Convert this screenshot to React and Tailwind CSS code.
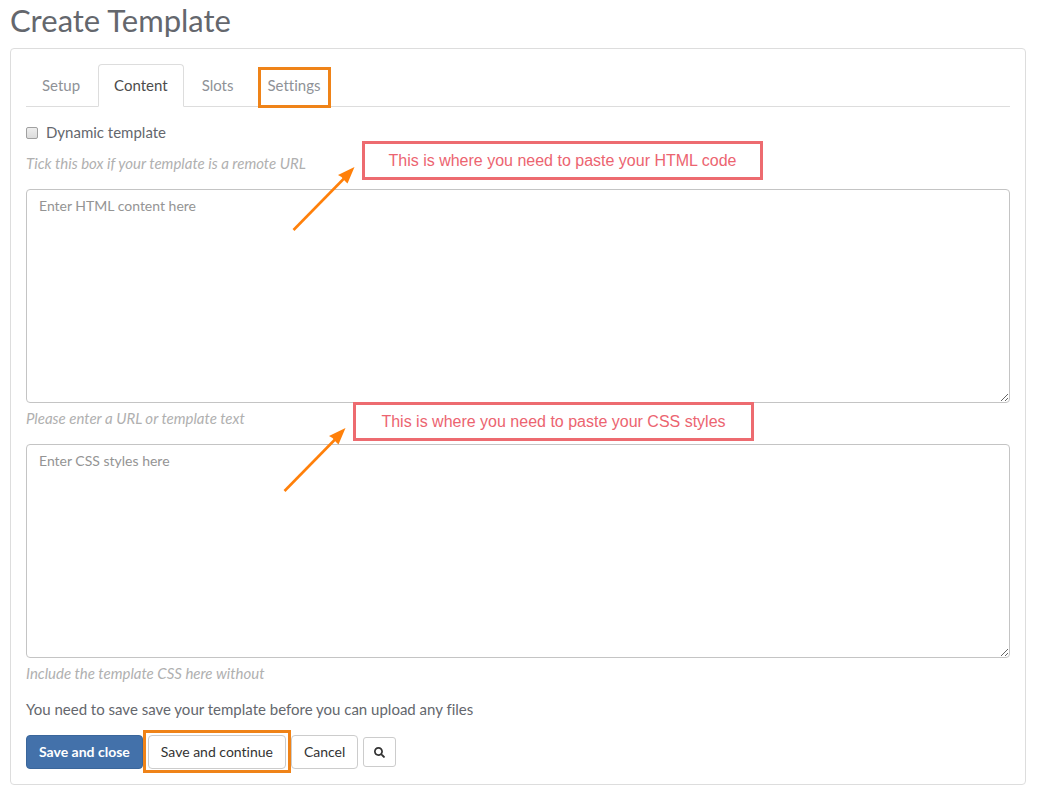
import React from 'react';
import { FaSearch } from 'react-icons/fa';

const tabs = [
  { id: "setup", label: "Setup" },
  { id: "content", label: "Content", active: true },
  { id: "slots", label: "Slots" },
  { id: "settings", label: "Settings", highlight: true }
];

export default function App() {
  return (
    <main className="pl-[10px] pr-[15px] pb-5 bg-white font-['Lato',sans-serif] text-[15px] leading-[21px] text-[#64676d] [font-variant-ligatures:none]">
      <h1 className="pt-[3px] mb-[11px] text-[31px] leading-[34px]">Create Template</h1>

      <form className="p-[15px] border border-[#dddddd] rounded-[4px]">
        <nav className="flex gap-[2px] mb-[15px] border-b border-[#dddddd]">
          {tabs.map(tab => <Tab key={tab.id} tab={tab} />)}
        </nav>

        <label className="flex items-center gap-2 mb-[10px]">
          <input type="checkbox" className="appearance-none w-3 h-3 rounded-[2px] border border-[#a0a0a0] bg-linear-to-b from-[#eeeeee] to-[#dcdcdc] checked:bg-[#428bca]" />
          Dynamic template
        </label>
        <Help>Tick this box if your template is a remote URL</Help>

        <Field id="html" placeholder="Enter HTML content here" help="Please enter a URL or template text">
          <Callout className="left-[336px] -top-12">This is where you need to paste your HTML code</Callout>
        </Field>
        <Field id="css" placeholder="Enter CSS styles here" help="Include the template CSS here without">
          <Callout className="left-[327px] -top-[42px]">This is where you need to paste your CSS styles</Callout>
        </Field>

        <p className="my-[15px]">You need to save save your template before you can upload any files</p>

        <div className="flex items-center gap-[5px] text-sm">
          <button type="button" className="h-[34px] px-3 border border-[#3a669b] rounded-[4px] bg-[#4371aa] font-bold text-white">Save and close</button>
          <div className="relative">
            <button type="button" className="h-[34px] px-3 border border-[#cccccc] rounded-[4px] bg-white text-[#333333]">Save and continue</button>
            <div className="absolute -inset-x-[5px] -top-[5px] -bottom-[4px] border-3 border-[#ef8318] pointer-events-none"></div>
          </div>
          <button type="button" className="h-[34px] px-3 border border-[#cccccc] rounded-[4px] bg-white text-[#333333]">Cancel</button>
          <button type="button" aria-label="Search" className="h-[30px] px-[10px] border border-[#cccccc] rounded-[3px] bg-white text-[#333333]">
            <FaSearch className="w-[11px] h-[11px]" />
          </button>
        </div>
      </form>
    </main>
  );
}

function Tab({ tab }) {
  return (
    <a
      href={`#${tab.id}`}
      className={`relative -mb-px px-[15px] py-[10px] border rounded-t-[4px] ${tab.active ? "bg-white border-[#dddddd] border-b-white text-[#4c4c4c]" : "border-transparent text-[#8f9297]"}`}
    >
      {tab.label}
      {tab.highlight && <span className="absolute left-[6px] right-[4px] top-[2px] -bottom-[2px] border-3 border-[#ef8318]"></span>}
    </a>
  );
}

function Field({ id, placeholder, help, children }) {
  return (
    <div className="relative mt-[15px]">
      <textarea
        id={id}
        aria-label={placeholder}
        placeholder={placeholder}
        className="block w-full h-[214px] mb-[5px] px-3 py-[6px] border border-[#c4c4c4] rounded-[4px] text-sm placeholder:text-[#949494]"
      ></textarea>
      <Help>{help}</Help>
      {children}
    </div>
  );
}

function Help({ children }) {
  return <p className="italic text-[#b0b0b0]">{children}</p>;
}

// Boxed note with an arrow coming up to its left side
function Callout({ className, children }) {
  return (
    <div className={`absolute w-[401px] h-[39px] flex items-center justify-center border-3 border-[#ed6b70] bg-white font-['Liberation_Sans',sans-serif] text-base text-[#ec6470] ${className}`}>
      {children}
      <svg className="absolute -left-[73px] top-[21px]" width="64" height="68" viewBox="0 0 64 68">
        <path d="M1.5 65 L52 13.5" stroke="#ff800a" strokeWidth="2.6" fill="none" />
        <path d="M62.5 2 L55.5 18.5 L52.5 15.5 L49.5 12 L46 10 Z" fill="#ff800a" />
      </svg>
    </div>
  );
}
